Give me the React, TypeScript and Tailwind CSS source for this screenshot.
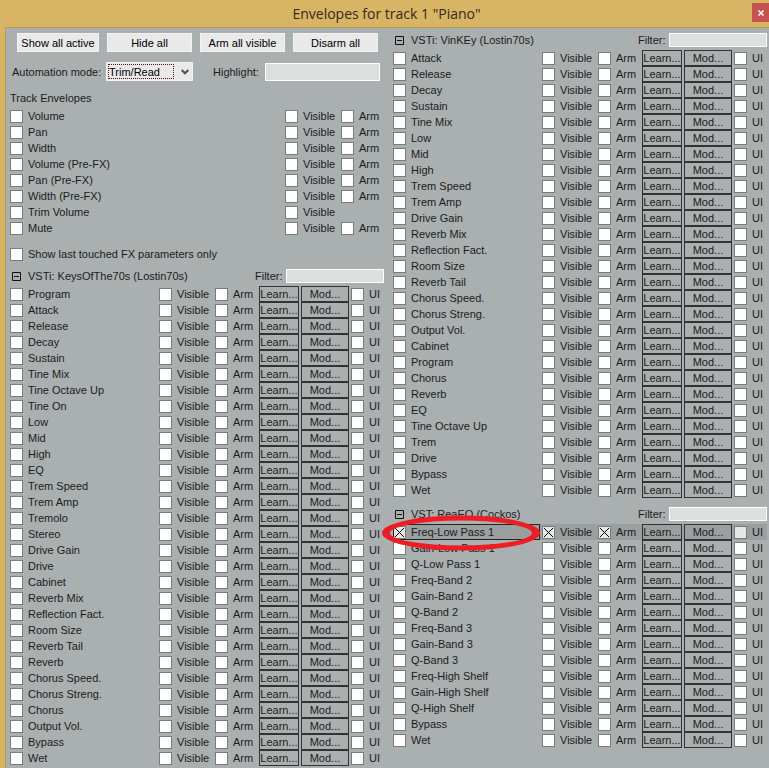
import { useId } from "react";

const trackEnvelopes = [
  "Volume",
  "Pan",
  "Width",
  "Volume (Pre-FX)",
  "Pan (Pre-FX)",
  "Width (Pre-FX)",
  "Trim Volume",
  "Mute",
];

const keysParams = [
  "Program", "Attack", "Release", "Decay", "Sustain", "Tine Mix", "Tine Octave Up", "Tine On",
  "Low", "Mid", "High", "EQ", "Trem Speed", "Trem Amp", "Tremolo", "Stereo", "Drive Gain",
  "Drive", "Cabinet", "Reverb Mix", "Reflection Fact.", "Room Size", "Reverb Tail", "Reverb",
  "Chorus Speed.", "Chorus Streng.", "Chorus", "Output Vol.", "Bypass", "Wet",
];

const vinKeyParams = [
  "Attack", "Release", "Decay", "Sustain", "Tine Mix", "Low", "Mid", "High", "Trem Speed",
  "Trem Amp", "Drive Gain", "Reverb Mix", "Reflection Fact.", "Room Size", "Reverb Tail",
  "Chorus Speed.", "Chorus Streng.", "Output Vol.", "Cabinet", "Program", "Chorus", "Reverb",
  "EQ", "Tine Octave Up", "Trem", "Drive", "Bypass", "Wet",
];

const reaEqParams = [
  "Freq-Low Pass 1", "Gain-Low Pass 1", "Q-Low Pass 1", "Freq-Band 2", "Gain-Band 2",
  "Q-Band 2", "Freq-Band 3", "Gain-Band 3", "Q-Band 3", "Freq-High Shelf",
  "Gain-High Shelf", "Q-High Shelf", "Bypass", "Wet",
];

type CheckProps = { label: string; checked?: boolean; dim?: boolean; className?: string };

function Check({ label, checked = false, dim = false, className = "" }: CheckProps) {
  return (
    <label className={`flex h-4 items-center gap-[5px] whitespace-nowrap ${className}`}>
      <span className="mt-px grid shrink-0">
        <input
          type="checkbox"
          defaultChecked={checked}
          className={`peer col-start-1 row-start-1 size-[13px] appearance-none border border-[#7b7b7b] ${dim ? "bg-[#e6e6e6]" : "bg-white"}`}
        />
        <svg
          viewBox="0 0 13 13"
          className="pointer-events-none invisible col-start-1 row-start-1 size-[13px] peer-checked:visible"
          aria-hidden="true"
        >
          <path d="M2 2l9 9M11 2l-9 9" stroke="#000" strokeWidth="1" fill="none" />
        </svg>
      </span>
      {label}
    </label>
  );
}

function CellButton({ label, className }: { label: string; className: string }) {
  return (
    <button type="button" className={`h-4 shrink-0 border border-[#333] text-center leading-[14px] ${className}`}>
      {label}
    </button>
  );
}

function ParamRow({ name, active = false }: { name: string; active?: boolean }) {
  return (
    <div className={`relative flex h-4 ${active ? "bg-[#9a9f9f]" : ""}`}>
      <div className="flex-1">
        <Check
          label={name}
          checked={active}
          dim={active}
          className={active ? "mr-[2px] outline outline-1 -outline-offset-1 outline-[#222]" : ""}
        />
      </div>
      <Check label="Visible" checked={active} dim={active} className="w-14 shrink-0" />
      <Check label="Arm" checked={active} dim={active} className="w-11 shrink-0" />
      <CellButton label="Learn..." className="mr-[2px] w-10" />
      <CellButton label="Mod..." className="mr-[2px] w-12" />
      <Check label="UI" dim={active} className="w-[33px] shrink-0" />
      {active && (
        <svg
          viewBox="0 0 160 36"
          className="pointer-events-none absolute -top-[9px] -left-3 z-10 h-9 w-40"
          aria-hidden="true"
        >
          <path
            fillRule="evenodd"
            fill="#ee1c24"
            d="M1 18A79 17.500 0 0 1 159 18A79 17.500 0 0 1 1 18ZM9 18A71 12.500 0 0 0 151 18A71 12.500 0 0 0 9 18Z"
          />
        </svg>
      )}
    </div>
  );
}

function PluginSection({ title, params, activeParam }: { title: string; params: string[]; activeParam?: string }) {
  const id = useId();
  return (
    <section>
      <header className="mb-[2px] flex h-4 items-center">
        <button type="button" aria-label="Collapse section" className="mr-[7px] ml-[2px] h-[10px] shrink-0 pt-px">
          <svg viewBox="0 0 9 9" className="block size-[9px]" aria-hidden="true">
            <path d="M.5.5h8v8h-8zM2 4.5h5" fill="none" stroke="#111" />
          </svg>
        </button>
        <h2 className="flex-1 whitespace-nowrap">{title}</h2>
        <label htmlFor={id} className="w-[31px] shrink-0">
          Filter:
        </label>
        <input id={id} type="text" className="h-[14px] w-[98px] shrink-0 border border-white bg-[#dcdfdd] px-1 outline-none" />
      </header>
      {params.map((p) => (
        <ParamRow key={p} name={p} active={p === activeParam} />
      ))}
    </section>
  );
}

const topButton = "h-[19px] border border-[#f3f3f3] bg-[#e9e9e9] text-center text-black";

export default function App() {
  return (
    <div className="min-h-screen border-l-[5px] border-[#d8b465] bg-[#aaafaf] font-['Liberation_Sans',Arial,sans-serif] text-[11px] leading-4 text-[#1c1c1c]">
      <div className="flex h-[27px] items-center bg-[#d8b465]">
        <h1 className="flex-1 pl-4 text-center font-['Open_Sans','Noto_Sans',sans-serif] text-[14px] text-[#332b1a]">
          Envelopes for track 1 "Piano"
        </h1>
        <button
          type="button"
          aria-label="Close"
          className="-mt-[2px] flex h-[19px] w-[17px] items-center justify-center bg-[#c75050]"
        >
          <svg viewBox="0 0 6 6" className="size-[6px]" aria-hidden="true">
            <path d="M.5.5l5 5M5.5.5l-5 5" stroke="#fff" strokeWidth="1.5" fill="none" />
          </svg>
        </button>
      </div>

      <main className="grid grid-cols-2 items-start gap-[9px] border-t border-l border-[#b8974f] pr-[2px] pb-[2px] pl-1">
        <div>
          <div className="mt-[5px] flex gap-2 pr-[6px] pl-[7px]">
            <button type="button" className={`w-[82px] ${topButton}`}>Show all active</button>
            <button type="button" className={`flex-1 ${topButton}`}>Hide all</button>
            <button type="button" className={`flex-1 ${topButton}`}>Arm all visible</button>
            <button type="button" className={`flex-1 ${topButton}`}>Disarm all</button>
          </div>

          <div className="mt-[10px] flex h-[19px] items-center pr-1 pl-[2px]">
            <label htmlFor="mode" className="w-[94px] shrink-0">Automation mode:</label>
            <div className="grid w-[87px] shrink-0 items-center">
              <select
                id="mode"
                className="col-start-1 row-start-1 h-[19px] w-full appearance-none border border-[#f3f3f3] bg-[#e9e9e9] pl-[2px] text-black outline-none"
              >
                <option>Trim/Read</option>
              </select>
              <span className="pointer-events-none col-start-1 row-start-1 ml-[2px] h-[15px] w-[66px] border border-dotted border-[#5a1010]" />
              <svg
                viewBox="0 0 8 6"
                className="pointer-events-none col-start-1 row-start-1 mr-1 h-[6px] w-2 justify-self-end"
                aria-hidden="true"
              >
                <path d="M.7 1L4 4.3 7.300 1" fill="none" stroke="#505050" strokeWidth="2" />
              </svg>
            </div>
            <label htmlFor="highlight" className="ml-5 w-[52px] shrink-0">Highlight:</label>
            <input id="highlight" type="text" className="h-[18px] min-w-0 flex-1 border border-white bg-[#dcdfdd] px-1 outline-none" />
          </div>

          <h2 className="mt-[9px] mb-[2px]">Track Envelopes</h2>
          {trackEnvelopes.map((name) => (
            <div key={name} className="flex h-4">
              <Check label={name} className="flex-1" />
              <Check label="Visible" className="w-14 shrink-0" />
              <div className="w-[43px] shrink-0">{name !== "Trim Volume" && <Check label="Arm" />}</div>
            </div>
          ))}

          <div className="mt-[10px] mb-[6px] flex">
            <Check label="Show last touched FX parameters only" />
          </div>

          <PluginSection title="VSTi: KeysOfThe70s (Lostin70s)" params={keysParams} />
        </div>

        <div className="mt-1 flex flex-col gap-2">
          <PluginSection title="VSTi: VinKEy (Lostin70s)" params={vinKeyParams} />
          <PluginSection title="VST: ReaEQ (Cockos)" params={reaEqParams} activeParam="Freq-Low Pass 1" />
        </div>
      </main>
    </div>
  );
}
